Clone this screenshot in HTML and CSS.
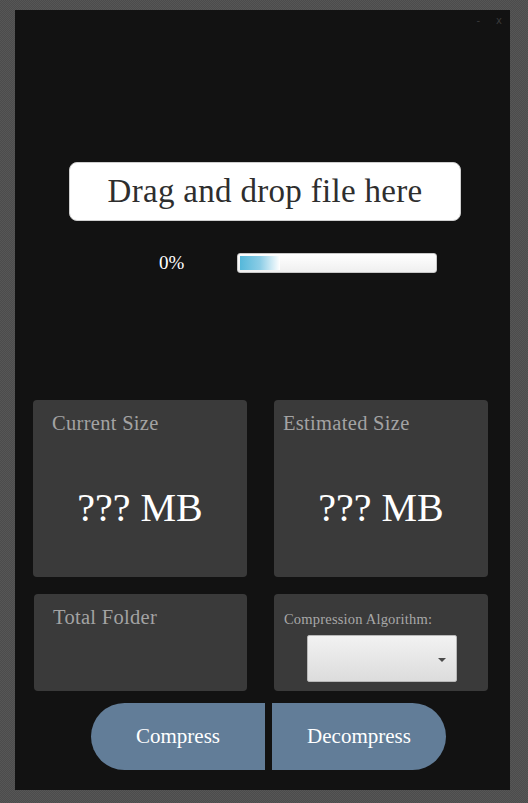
FILE: index.html
```html
<!DOCTYPE html>
<html>
<head>
<meta charset="utf-8">
<link rel="stylesheet" href="styles.css">
</head>
<body>
<div class="window">
  <div class="controls"><span class="min">-</span><span class="close">x</span></div>
  <div class="drop">Drag and drop file here</div>
  <div class="progress-row">
    <span class="pct">0%</span>
    <div class="bar"><div class="fill"></div></div>
  </div>
  <div class="cards">
    <div class="card big">
      <div class="title pl19">Current Size</div>
      <div class="value">??? MB</div>
    </div>
    <div class="card big">
      <div class="title pl9">Estimated Size</div>
      <div class="value">??? MB</div>
    </div>
    <div class="card small shift">
      <div class="title pl19">Total Folder</div>
    </div>
    <div class="card small algo">
      <div class="label">Compression Algorithm:</div>
      <div class="select"><span class="arrow"></span></div>
    </div>
  </div>
  <div class="buttons">
    <div class="btn left">Compress</div>
    <div class="btn right">Decompress</div>
  </div>
</div>
</body>
</html>
```
FILE: styles.css
```css
html, body {
  margin: 0;
  padding: 0;
}
body {
  width: 528px;
  height: 803px;
  background-color: #505050;
  background-image: repeating-conic-gradient(#4c4c4c 0% 25%, #565656 0% 50%);
  background-size: 2px 2px;
  font-family: "Liberation Serif", "DejaVu Serif", serif;
  overflow: hidden;
}
.window {
  position: relative;
  margin-left: 15px;
  margin-top: 10px;
  width: 495px;
  height: 780px;
  background: #121212;
  display: flex;
  flex-direction: column;
}
.controls {
  height: 20px;
  display: flex;
  justify-content: flex-end;
  gap: 16px;
  padding-right: 8px;
  color: #3a3a3a;
  font-family: "DejaVu Sans", sans-serif;
  font-size: 10px;
  line-height: 22px;
}
.drop {
  margin: 132px 0 0 54px;
  width: 390px;
  height: 57px;
  background: #ffffff;
  border: 1px solid #cfcfcf;
  border-radius: 8px;
  color: #2e2e2e;
  font-size: 33px;
  letter-spacing: 0.3px;
  line-height: 57px;
  text-align: center;
}
.progress-row {
  margin-top: 32px;
  display: flex;
  align-items: center;
  height: 20px;
}
.pct {
  margin-left: 144px;
  width: 78px;
  color: #ffffff;
  font-size: 19px;
  line-height: 20px;
}
.bar {
  border: 1px solid #c8c8c8;
  border-radius: 3px;
  background: linear-gradient(#ffffff, #efefef);
  padding: 2px 2px;
  box-sizing: border-box;
  height: 20px;
  width: 200px;
}
.fill {
  width: 40px;
  height: 100%;
  background: linear-gradient(90deg, #55b8da 0%, #8ccde6 50%, #ffffff 100%);
}
.cards {
  margin-top: 127px;
  margin-left: 18px;
  display: grid;
  grid-template-columns: 214px 214px;
  column-gap: 27px;
  row-gap: 17px;
}
.card {
  background: #3a3a3a;
  border-radius: 4px;
  display: flex;
  flex-direction: column;
}
.card.big {
  height: 177px;
}
.card.small {
  height: 97px;
}
.card.shift {
  margin-left: 1px;
}
.title {
  color: #a3a3a3;
  font-size: 20.5px;
  letter-spacing: 0.3px;
  line-height: 22px;
  padding-top: 12px;
}
.pl19 { padding-left: 19px; }
.pl9 { padding-left: 9px; }
.value {
  flex: 1;
  display: flex;
  align-items: center;
  justify-content: center;
  color: #ffffff;
  font-size: 40px;
  padding-top: 4px;
}
.label {
  color: #a8a8a8;
  font-size: 14.5px;
  letter-spacing: 0.2px;
  line-height: 16px;
  padding: 17px 0 0 10px;
}
.select {
  position: relative;
  margin: 8px 0 0 33px;
  width: 148px;
  height: 45px;
  border: 1px solid #b8b8b8;
  border-radius: 2px;
  background: linear-gradient(#f2f2f2, #dcdcdc);
}
.arrow {
  position: absolute;
  right: 10px;
  top: 22px;
  width: 0;
  height: 0;
  border-left: 4px solid transparent;
  border-right: 4px solid transparent;
  border-top: 4px solid #4a4a4a;
}
.buttons {
  margin-top: 12px;
  margin-left: 76px;
  display: flex;
  gap: 7px;
}
.btn {
  width: 174px;
  height: 67px;
  background: #627d98;
  color: #ffffff;
  font-size: 21px;
  line-height: 67px;
  text-align: center;
}
.btn.left {
  border-radius: 34px 0 0 34px;
}
.btn.right {
  border-radius: 0 34px 34px 0;
}
```
